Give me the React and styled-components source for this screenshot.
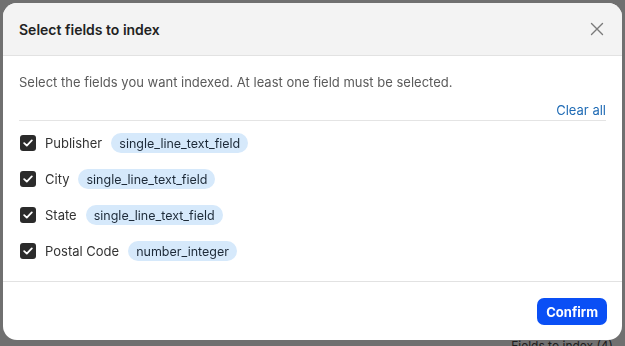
import styled, { createGlobalStyle } from "styled-components";

const fields = [
    {name: "Publisher", type: "single_line_text_field"},
    {name: "City", type: "single_line_text_field"},
    {name: "State", type: "single_line_text_field"},
    {name: "Postal Code", type: "number_integer"},
];

const App = () => {
    return <>
        <GlobalStyle/>
        <Page>
            <BehindLabel>Fields to index (4)</BehindLabel>
        </Page>
        <Overlay>
            <Modal>
                <Header>
                    <Title>Select fields to index</Title>
                    <CloseButton aria-label="Close">
                        <svg width="14" height="14" viewBox="0 0 14 14">
                            <path d="M1.5 1.5L12.5 12.5M12.5 1.5L1.5 12.5" stroke="#7a7a7a" strokeWidth="1.4"
                                  strokeLinecap="round"/>
                        </svg>
                    </CloseButton>
                </Header>
                <Body>
                    <Description>Select the fields you want indexed. At least one field must be selected.</Description>
                    <ClearRow>
                        <ClearLink>Clear all</ClearLink>
                    </ClearRow>
                    <FieldList>
                        {fields.map(f => (
                            <FieldRow key={f.name}>
                                <Checkbox>
                                    <svg width="10" height="8" viewBox="0 0 10 8">
                                        <path d="M1.2 4.2L3.8 6.6L8.8 1.4" fill="none" stroke="#fff" strokeWidth="1.8"
                                              strokeLinecap="round" strokeLinejoin="round"/>
                                    </svg>
                                </Checkbox>
                                <FieldName>{f.name}</FieldName>
                                <TypeChip>{f.type}</TypeChip>
                            </FieldRow>
                        ))}
                    </FieldList>
                </Body>
                <Footer>
                    <ConfirmButton>Confirm</ConfirmButton>
                </Footer>
            </Modal>
        </Overlay>
    </>
}

const GlobalStyle = createGlobalStyle`
  html, body {
    margin: 0;
    padding: 0;
  }

  body {
    font-family: Inter, "Noto Sans", "Liberation Sans", sans-serif;
    background: #ffffff;
  }
`

const Page = styled.div`
  height: 346px;
  display: flex;
  flex-direction: column;
  justify-content: flex-end;
  align-items: flex-end;
  padding-right: 12px;
  box-sizing: border-box;
`

const BehindLabel = styled.div`
  font-size: 12px;
  line-height: 14px;
  color: #444;
  margin-bottom: -7px;
`

const Overlay = styled.div`
  position: fixed;
  inset: 0;
  background: rgba(0, 0, 0, 0.56);
  padding: 3px 3px 0 3px;
`

const Modal = styled.div`
  width: 619px;
  height: 337px;
  background: #fff;
  border-radius: 14px;
  overflow: hidden;
  display: flex;
  flex-direction: column;
`

const Header = styled.div`
  height: 52px;
  flex-shrink: 0;
  background: #f3f3f3;
  border-bottom: 1px solid #e2e2e2;
  padding: 0 16px;
  display: flex;
  align-items: center;
  justify-content: space-between;
`

const Title = styled.h2`
  margin: 0;
  font-size: 14px;
  font-weight: 600;
  color: #222;
`

const CloseButton = styled.button`
  border: none;
  background: none;
  padding: 0;
  margin-right: 2px;
  display: flex;
`

const Body = styled.div`
  padding: 17px 16px 12px 16px;
  border-bottom: 1px solid #e2e2e2;
`

const Description = styled.p`
  margin: 0;
  font-size: 13px;
  line-height: 18px;
  color: #5a5a5a;
`

const ClearRow = styled.div`
  display: flex;
  justify-content: flex-end;
  margin-top: 10px;
  padding-bottom: 1px;
  border-bottom: 1px solid #e4e4e4;
`

const ClearLink = styled.a`
  font-size: 13px;
  line-height: 18px;
  color: #1f6bb5;
  cursor: pointer;
`

const FieldList = styled.div`
  padding-top: 4px;
  display: flex;
  flex-direction: column;
`

const FieldRow = styled.label`
  height: 36px;
  display: flex;
  align-items: center;
  gap: 9px;
`

const Checkbox = styled.span`
  width: 16px;
  height: 16px;
  margin-left: 1px;
  border-radius: 3px;
  background: #2b2b2b;
  display: flex;
  align-items: center;
  justify-content: center;
`

const FieldName = styled.span`
  font-size: 13px;
  color: #333;
`

const TypeChip = styled.span`
  height: 20px;
  padding: 0 8px;
  border-radius: 10px;
  background: #d6e9fb;
  color: #1d2a38;
  font-size: 12.5px;
  display: flex;
  align-items: center;
`

const Footer = styled.div`
  flex: 1;
  display: flex;
  justify-content: flex-end;
  align-items: flex-start;
  padding: 16px 15px 0 0;
`

const ConfirmButton = styled.button`
  height: 27px;
  padding: 0 9px;
  border: none;
  border-radius: 7px;
  background: #0a4ff5;
  color: #fff;
  font-family: inherit;
  font-size: 13px;
  font-weight: 700;
`

export default App;
